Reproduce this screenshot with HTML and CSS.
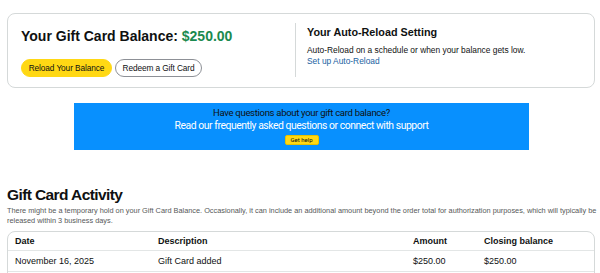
FILE: index.html
```html
<!DOCTYPE html>
<html>
<head>
    <title>Gift Card Balance</title>
    <meta name="viewport" content="width=device-width, initial-scale=1.0">
    <link rel="stylesheet" href="styles.css">
</head>
<body>
    <div class="page">
        <div class="balance-card">
            <div class="balance-panel">
                <h1 class="balance-title">Your Gift Card Balance: <span class="amount">$250.00</span></h1>
                <div class="balance-actions">
                    <button class="btn btn-primary">Reload Your Balance</button>
                    <button class="btn btn-secondary">Redeem a Gift Card</button>
                </div>
            </div>
            <div class="reload-panel">
                <h2 class="reload-title">Your Auto-Reload Setting</h2>
                <p class="reload-text">Auto-Reload on a schedule or when your balance gets low.</p>
                <a class="reload-link" href="#">Set up Auto-Reload</a>
            </div>
        </div>

        <div class="help-banner">
            <div class="help-question">Have questions about your gift card balance?</div>
            <div class="help-subline">Read our frequently asked questions or connect with support</div>
            <button class="help-button">Get help</button>
        </div>

        <h2 class="activity-title">Gift Card Activity</h2>
        <p class="activity-note">There might be a temporary hold on your Gift Card Balance. Occasionally, it can include an additional amount beyond the order total for authorization purposes, which will typically be released within 3 business days.</p>

        <div class="activity-table">
            <div class="row row-head">
                <div class="cell">Date</div>
                <div class="cell">Description</div>
                <div class="cell">Amount</div>
                <div class="cell">Closing balance</div>
            </div>
            <div class="row">
                <div class="cell">November 16, 2025</div>
                <div class="cell">Gift Card added</div>
                <div class="cell">$250.00</div>
                <div class="cell">$250.00</div>
            </div>
            <div class="row">
                <div class="cell">&nbsp;</div>
                <div class="cell"></div>
                <div class="cell"></div>
                <div class="cell"></div>
            </div>
        </div>
    </div>
</body>
</html>
```

FILE: styles.css
```css
body {
    margin: 0;
    background-color: #fff;
    color: #0f1111;
    font-family: "Liberation Sans", Arial, sans-serif;
}

.page {
    padding: 13px 5px 0 7px;
}

.balance-card {
    display: flex;
    border: 1px solid #d5d9d9;
    border-radius: 8px;
    height: 75px;
    box-sizing: border-box;
    padding: 9px 0 10px 0;
}

.balance-panel {
    width: 288px;
    box-sizing: border-box;
    padding-left: 13px;
    border-right: 1px solid #d5d9d9;
}

.balance-title {
    margin: 0;
    font-size: 14px;
    line-height: 20px;
    font-weight: bold;
    padding-top: 3px;
}

.amount {
    color: #1b8a4f;
}

.balance-actions {
    display: flex;
    gap: 3px;
    margin-top: 13px;
}

.btn {
    height: 18px;
    padding: 0;
    box-sizing: border-box;
    border-radius: 9px;
    font-family: inherit;
    font-size: 8.3px;
    letter-spacing: -0.1px;
    white-space: nowrap;
    color: #0f1111;
    cursor: pointer;
}

.btn-primary {
    width: 91px;
    background-color: #ffd814;
    border: 1px solid #ffd814;
}

.btn-secondary {
    width: 87px;
    background-color: #fff;
    border: 1px solid #8d9096;
}

.reload-panel {
    padding-left: 11px;
    padding-top: 1px;
}

.reload-title {
    margin: 0;
    font-size: 10.8px;
    line-height: 16px;
    font-weight: bold;
}

.reload-text {
    margin: 5px 0 0;
    font-size: 8.4px;
    line-height: 11px;
}

.reload-link {
    display: block;
    font-size: 8.4px;
    line-height: 11px;
    color: #2162a1;
    text-decoration: none;
}

.help-banner {
    width: 455px;
    height: 47px;
    box-sizing: border-box;
    margin: 15px 0 0 67px;
    padding-top: 4px;
    background-color: #0890fe;
    display: flex;
    flex-direction: column;
    align-items: center;
    font-family: Roboto, "Liberation Sans", sans-serif;
}

.help-question {
    font-size: 9.5px;
    line-height: 12px;
    letter-spacing: -0.3px;
    color: #0f1111;
}

.help-subline {
    font-size: 10.4px;
    line-height: 13px;
    letter-spacing: -0.45px;
    color: #fff;
}

.help-button {
    margin-top: 3px;
    width: 34px;
    height: 10px;
    padding: 0;
    background-color: #ffd814;
    border: 1px solid #e6c200;
    border-radius: 2px;
    font-family: inherit;
    font-size: 6px;
    line-height: 8px;
    color: #0f1111;
}

.activity-title {
    margin: 36px 0 0;
    font-size: 15.5px;
    line-height: 18px;
    letter-spacing: -0.6px;
    font-weight: bold;
}

.activity-note {
    margin: 2px -4px 0 0;
    font-size: 7.35px;
    line-height: 10px;
    color: #565959;
}

.activity-table {
    margin-top: 5px;
    border: 1px solid #d5d9d9;
    border-radius: 8px;
    width: 588px;
    box-sizing: border-box;
}

.row {
    display: grid;
    grid-template-columns: 143px 255px 71px 1fr;
    height: 20px;
    align-items: center;
    border-bottom: 1px solid #e3e6e6;
    font-size: 9px;
}

.row-head {
    height: 18px;
    font-weight: bold;
}

.cell {
    padding-left: 7px;
}
```
